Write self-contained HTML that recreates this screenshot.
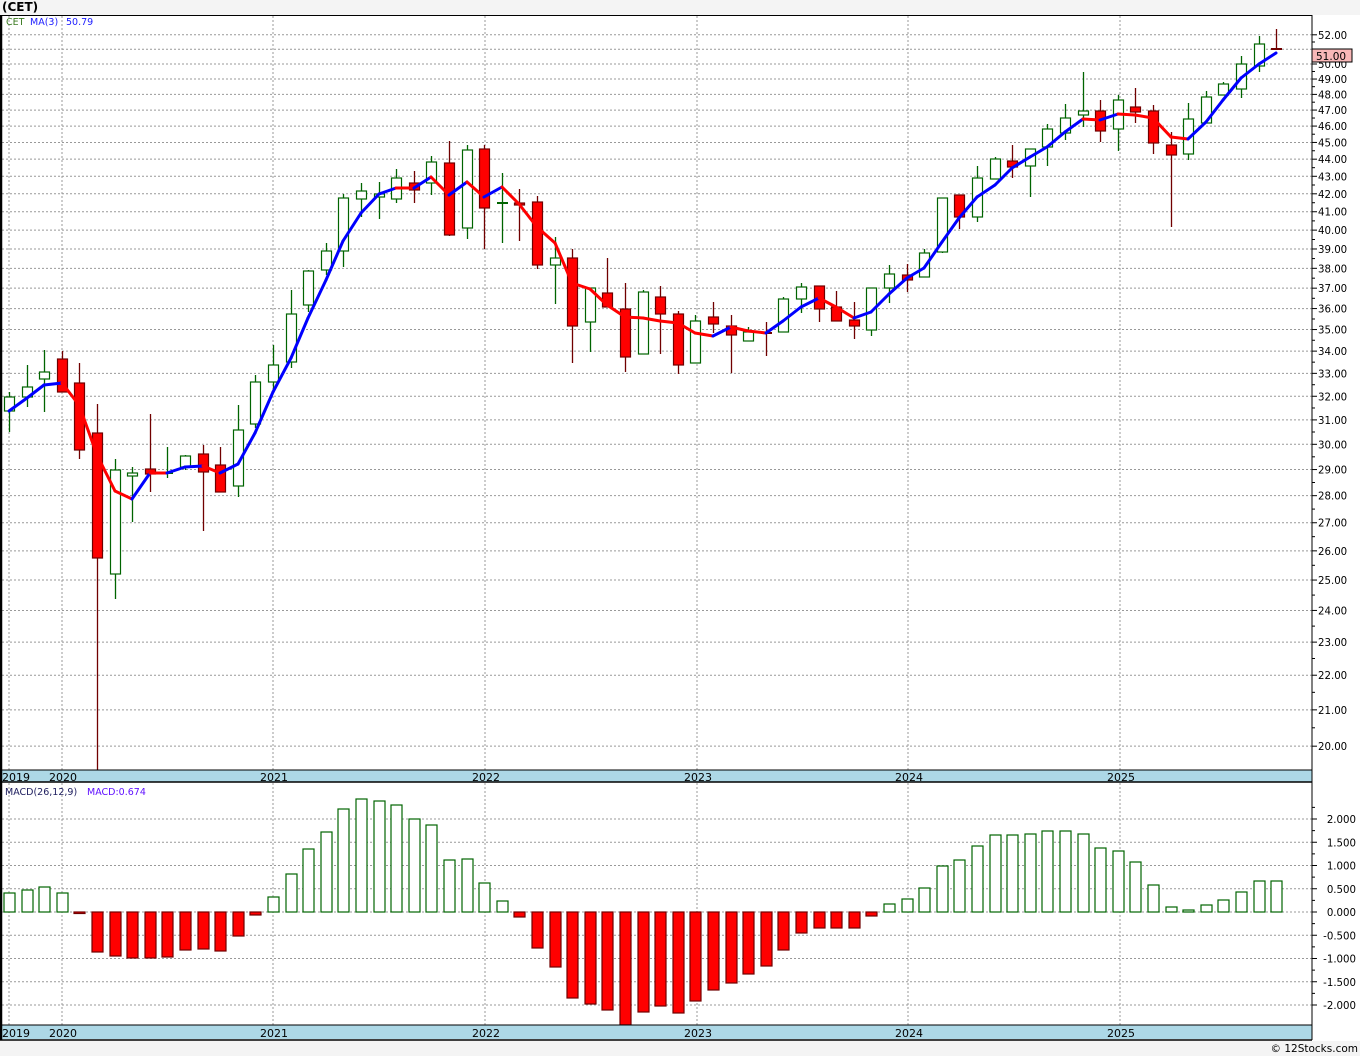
<!DOCTYPE html>
<html><head><meta charset="utf-8">
<style>
html,body{margin:0;padding:0;background:#f4f4f4;}
body{width:1360px;height:1056px;overflow:hidden;position:relative;font-family:"DejaVu Sans","Liberation Sans",sans-serif;}
svg{position:absolute;left:0;top:0;}
text{font-family:"DejaVu Sans","Liberation Sans",sans-serif;}
</style></head>
<body>
<svg id="s" width="1360" height="1056" xmlns="http://www.w3.org/2000/svg">
<rect x="0" y="15" width="1312" height="1026" fill="#fff"/>
<rect x="1312" y="15" width="48" height="1026" fill="#fff"/>
<g id="grid"></g>
<g id="candles"></g>
<g id="ma"></g>
<g id="macd"></g>
<rect x="0" y="770" width="1312" height="12" fill="#add8e6"/>
<line x1="0" y1="782" x2="1312" y2="782" stroke="#000" stroke-width="1.5"/>
<line x1="0" y1="770" x2="1312" y2="770" stroke="#000" stroke-width="1"/>
<rect x="0" y="1025" width="1312" height="14" fill="#add8e6"/>
<line x1="0" y1="1025" x2="1312" y2="1025" stroke="#000" stroke-width="1"/>
<line x1="0" y1="1040" x2="1312" y2="1040" stroke="#000" stroke-width="1.5"/>
<line x1="0" y1="15.5" x2="1312" y2="15.5" stroke="#000" stroke-width="1"/>
<line x1="1" y1="15" x2="1" y2="1040" stroke="#000" stroke-width="2.5"/>
<line x1="1312" y1="15" x2="1312" y2="1040" stroke="#000" stroke-width="1"/>
<g id="axis" font-size="10.2" fill="#000"></g>
<g font-size="11" fill="#000">
<text x="2" y="781">2019</text><text x="49" y="781">2020</text><text x="260" y="781">2021</text><text x="472" y="781">2022</text><text x="684" y="781">2023</text><text x="895" y="781">2024</text><text x="1107" y="781">2025</text>
<text x="2" y="1037">2019</text><text x="49" y="1037">2020</text><text x="260" y="1037">2021</text><text x="472" y="1037">2022</text><text x="684" y="1037">2023</text><text x="895" y="1037">2024</text><text x="1107" y="1037">2025</text>
</g>
<text x="2" y="11" font-size="12" font-weight="bold" fill="#000">(CET)</text>
<text x="6" y="25" font-size="9.5" fill="#3a7a20">CET</text>
<text x="30" y="25" font-size="9.5" fill="#2020ff">MA(3)</text>
<text x="66" y="25" font-size="9.5" fill="#2020ff">50.79</text>
<text x="5" y="795" font-size="9.5" fill="#202060">MACD(26,12,9)</text>
<text x="87" y="795" font-size="9.5" fill="#6010ff">MACD:0.674</text>
<rect x="1312" y="49" width="40" height="13" fill="#f8b8b8" stroke="#000" stroke-width="1"/>
<text x="1316" y="60" font-size="10.5" fill="#000">51.00</text>
<text x="1358" y="1052" font-size="10.5" fill="#000" text-anchor="end">© 12Stocks.com</text>
</svg>
<script>
var NS="http://www.w3.org/2000/svg";
function el(p,t,a){var e=document.createElementNS(NS,t);for(var k in a)e.setAttribute(k,a[k]);p.appendChild(e);return e;}
function py(p){return 2976.5-744.5*Math.log(p);}
var grid=document.getElementById('grid'),axis=document.getElementById('axis');
for(var p=20;p<=52;p++){var y=py(p);el(grid,'line',{x1:2,y1:y,x2:1312,y2:y,stroke:'#999','stroke-dasharray':'2,2','stroke-width':1});
el(axis,'line',{x1:1312,y1:y,x2:1317,y2:y,stroke:'#000'});
if(p!=51){var t=el(axis,'text',{x:1318,y:y+4});t.textContent=p+'.00';}
var yh=py(p+0.5);if(p<52)el(axis,'line',{x1:1312,y1:yh,x2:1315,y2:yh,stroke:'#000'});}
for(var v=-2;v<=2.01;v+=0.5){var y=912-v*46.5;el(grid,'line',{x1:2,y1:y,x2:1312,y2:y,stroke:'#999','stroke-dasharray':'2,2'});
el(axis,'line',{x1:1312,y1:y,x2:1317,y2:y,stroke:'#000'});
var t=el(axis,'text',{x:1356,y:y+4,'text-anchor':'end'});t.textContent=(v<0?'-':'')+Math.abs(v).toFixed(3);
var yh=912-(v+0.25)*46.5;if(yh>790&&yh<1024)el(axis,'line',{x1:1312,y1:yh,x2:1315,y2:yh,stroke:'#000'});}
[9,62,273,485,697,908,1120].forEach(function(x){el(grid,'line',{x1:x,y1:16,x2:x,y2:770,stroke:'#999','stroke-dasharray':'2,2'});el(grid,'line',{x1:x,y1:783,x2:x,y2:1025,stroke:'#999','stroke-dasharray':'2,2'});});
var C=[[392,397,411,432,'g'],[365,387,397,407,'g'],[350,372,379,412,'g'],[351,359,392,392,'r'],[363,383,450,459,'r'],[404,433,558,770,'r'],[459,470,574,599,'g'],[467,473,476,522,'g'],[414,469,474,492,'r'],[447,473,474,478,'g'],[455,456,467,470,'g'],[445,454,472,531,'r'],[447,465,492,492,'r'],[405,430,486,497,'g'],[375,382,424,428,'g'],[345,365,382,390,'g'],[290,314,362,368,'g'],[270,271,305,312,'g'],[243,251,270,275,'g'],[194,198,251,267,'g'],[183,191,199,217,'g'],[182,194,197,219,'g'],[169,178,199,203,'g'],[171,183,190,203,'r'],[156,162,183,195,'g'],[141,163,235,236,'r'],[145,150,228,239,'g'],[145,149,208,249,'r'],[173,203,204,243,'g'],[189,203,205,241,'r'],[196,202,265,269,'r'],[237,258,265,304,'g'],[249,258,326,363,'r'],[288,288,322,352,'g'],[258,293,307,307,'r'],[283,309,357,372,'r'],[290,292,354,354,'g'],[286,297,314,354,'r'],[311,314,365,374,'r'],[315,321,363,363,'g'],[302,317,324,333,'r'],[315,326,335,373,'r'],[327,332,341,341,'g'],[322,333,334,356,'r'],[297,299,332,332,'g'],[283,287,299,313,'g'],[286,286,309,322,'r'],[291,307,321,321,'r'],[302,320,326,339,'r'],[288,288,330,336,'g'],[265,274,288,303,'g'],[264,275,280,292,'r'],[249,253,277,277,'g'],[198,198,252,253,'g'],[195,195,217,229,'r'],[166,178,217,222,'g'],[157,159,179,179,'g'],[145,161,167,178,'r'],[149,149,166,197,'g'],[124,129,147,166,'g'],[104,118,133,140,'g'],[72,111,115,127,'g'],[100,111,131,142,'r'],[95,100,129,151,'g'],[88,107,112,123,'r'],[105,111,143,154,'r'],[132,145,155,227,'r'],[103,119,154,160,'g'],[91,97,123,123,'g'],[82,84,95,95,'g'],[56,64,89,98,'g'],[36,44,66,72,'g'],[29,49,49.5,49,'r']];
var X=[];for(var i=0;i<73;i++)X.push(Math.round(9+i*17.6));
var cg=document.getElementById('candles');
C.forEach(function(c,i){var x=X[i];var g=c[4]=='g';var sc=g?'#006400':'#700000';
el(cg,'line',{x1:x+0.5,y1:c[0],x2:x+0.5,y2:c[3],stroke:sc,'stroke-width':1.3});
var h=Math.max(c[2]-c[1],1);
if(h<=1.5){el(cg,'line',{x1:x-5,y1:c[1],x2:x+6,y2:c[1],stroke:sc,'stroke-width':2});}
else el(cg,'rect',{x:x-4.5,y:c[1],width:10,height:h,fill:g?'#fff':'#ff0000',stroke:sc,'stroke-width':1.2});});
var M=[411,398,385,383,405,455,491,499,473,473,467,466,473,464,433,392,358,318,280,241,213,194,188,188,177,195,182,197,187,204,227,243,283,289,305,317,318,321,323,333,336,327,331,333,321,307,298,307,318,312,294,278,268,242,218,197,185,168,157,147,132,119,120,114,115,118,137,139,122,100,78,64,53];
var mg=document.getElementById('ma');
for(var i=1;i<73;i++){el(mg,'line',{x1:X[i-1],y1:M[i-1],x2:X[i],y2:M[i],stroke:M[i]<M[i-1]?'#0000ff':'#ff0000','stroke-width':3,'stroke-linecap':'round'});}
var H=[893,890,887,893,913,952,956,958,958,957,950,949,951,936,915,897,874,849,832,809,799,801,805,819,825,860,859,883,901,917,948,967,998,1004,1010,1025,1012,1006,1013,1001,990,983,974,966,950,933,928,928,928,916,904,899,888,866,860,846,835,835,834,831,831,834,848,851,862,885,907,910,905,900,892,881,881];
var hg=document.getElementById('macd');
H.forEach(function(y,i){var x=X[i];
if(y<912)el(hg,'rect',{x:x-5,y:y,width:11,height:912-y,fill:'#fff',stroke:'#006400','stroke-width':1.2});
else el(hg,'rect',{x:x-5,y:912,width:11,height:Math.max(y-912,1.5),fill:'#ff0000',stroke:'#700000','stroke-width':1.2});});
</script>
</body></html>
